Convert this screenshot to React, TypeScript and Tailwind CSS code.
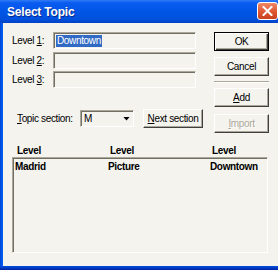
import React from "react";

// XP-style dialog: "Select Topic"
const raised =
  "flex items-center justify-center border border-t-white border-l-white border-r-[#404040] border-b-[#404040] shadow-[inset_-1px_-1px_0_#aca899]";
const sunken =
  "border border-t-[#aca899] border-l-[#aca899] border-r-white border-b-white shadow-[inset_1px_1px_0_#716f64]";

function TitleBar() {
  return (
    <div className="h-[23px] shrink-0 flex items-center pl-[7px] bg-[linear-gradient(180deg,#2f7cf6_0%,#0a5cf0_12%,#0055e6_50%,#0050dc_85%,#0040c4_100%)]">
      <span className="font-['Liberation_Sans',Arial,sans-serif] font-bold text-[12px] text-white tracking-[-0.2px] [text-shadow:1px_1px_0_#0a2a90]">
        Select Topic
      </span>
      <div className="ml-auto mb-[2px] w-[21px] h-[18px] shrink-0 rounded-[3px] border border-white bg-[linear-gradient(180deg,#f08a68,#e05a34_50%,#c8401c)] flex items-center justify-center">
        <svg width="11" height="10" viewBox="0 0 11 10">
          <path d="M1.5 1 L9.5 9 M9.5 1 L1.5 9" stroke="white" strokeWidth="2" strokeLinecap="square" />
        </svg>
      </div>
    </div>
  );
}

function LevelRow({ n, className, children }: { n: string; className?: string; children?: React.ReactNode }) {
  return (
    <div className={`flex items-center h-[17px] ${className ?? ""}`}>
      <span className="w-[41px]">
        Level <span className="underline underline-offset-1">{n}</span>:
      </span>
      <div className={`w-[143px] h-[17px] flex items-center pl-[2px] ${sunken}`}>{children}</div>
    </div>
  );
}

export default function App() {
  return (
    <div className="w-[278px] h-[270px] overflow-hidden flex flex-col bg-[#f4f3ee] font-['Liberation_Sans',Arial,sans-serif] text-[10px] tracking-[-0.35px] text-black leading-none">
      <TitleBar />
      <div className="flex flex-1 min-h-0">
        <div className="w-[3px] shrink-0 bg-[linear-gradient(90deg,#0046d6,#0058ee_60%,#0a5ff0)]" />
        <div className="flex-1 flex flex-col pl-[9px] pt-[9px]">
          <div className="flex">
            {/* left column */}
            <div className="w-[202px] flex flex-col">
              <LevelRow n="1">
                <span className="bg-[#316ac5] text-white px-[1px] h-[12px] flex items-center">Downtown</span>
              </LevelRow>
              <LevelRow n="2" className="mt-[3px]" />
              <LevelRow n="3" className="mt-[2px]" />

              <div className="mt-[21px] h-[19px] flex items-center">
                <span className="w-[68px] pl-[5px]">
                  <span className="underline underline-offset-1">T</span>opic section:
                </span>
                <div className={`w-[54px] h-[17px] flex items-center pl-[3px] ${sunken}`}>
                  <span>M</span>
                  <div className="ml-auto mr-[3px] w-[7px] h-[4px] bg-black [clip-path:polygon(0_0,100%_0,50%_100%)]" />
                </div>
                <div className={`ml-[9px] w-[60px] h-[19px] ${raised}`}>
                  <span>
                    <span className="underline underline-offset-1">N</span>ext section
                  </span>
                </div>
              </div>
            </div>

            {/* right column */}
            <div className="w-[55px] flex flex-col">
              <div className="h-[19px] flex items-center justify-center border border-black shadow-[inset_1px_1px_0_#fff,inset_-1px_-1px_0_#404040,inset_-2px_-2px_0_#aca899]">
                OK
              </div>
              <div className={`mt-[6px] h-[19px] ${raised}`}>Cancel</div>
              <div className="mt-[5px] h-[2px] border-t border-t-[#aca899] border-b border-b-white" />
              <div className={`mt-[5px] h-[19px] ${raised}`}>
                <span>
                  <span className="underline underline-offset-1">A</span>dd
                </span>
              </div>
              <div className={`mt-[7px] h-[19px] ${raised} text-[#aca899] [text-shadow:1px_1px_0_#fff]`}>
                <span>
                  <span className="underline underline-offset-1">I</span>mport
                </span>
              </div>
            </div>
          </div>

          {/* list */}
          <div className="mt-[12px] h-[12px] flex items-center pl-[5px] font-bold">
            <span className="w-[93px]">Level</span>
            <span className="w-[102px]">Level</span>
            <span>Level</span>
          </div>
          <div className={`w-[256px] h-[96px] ${sunken} pl-[2px] pt-[3px]`}>
            <div className="flex h-[12px] items-center font-bold">
              <span className="w-[93px]">Madrid</span>
              <span className="w-[102px]">Picture</span>
              <span>Downtown</span>
            </div>
          </div>
        </div>
      </div>
      <div className="h-[4px] shrink-0 bg-[linear-gradient(180deg,#0050e0,#0036bc_60%,#001f9e)]" />
    </div>
  );
}
